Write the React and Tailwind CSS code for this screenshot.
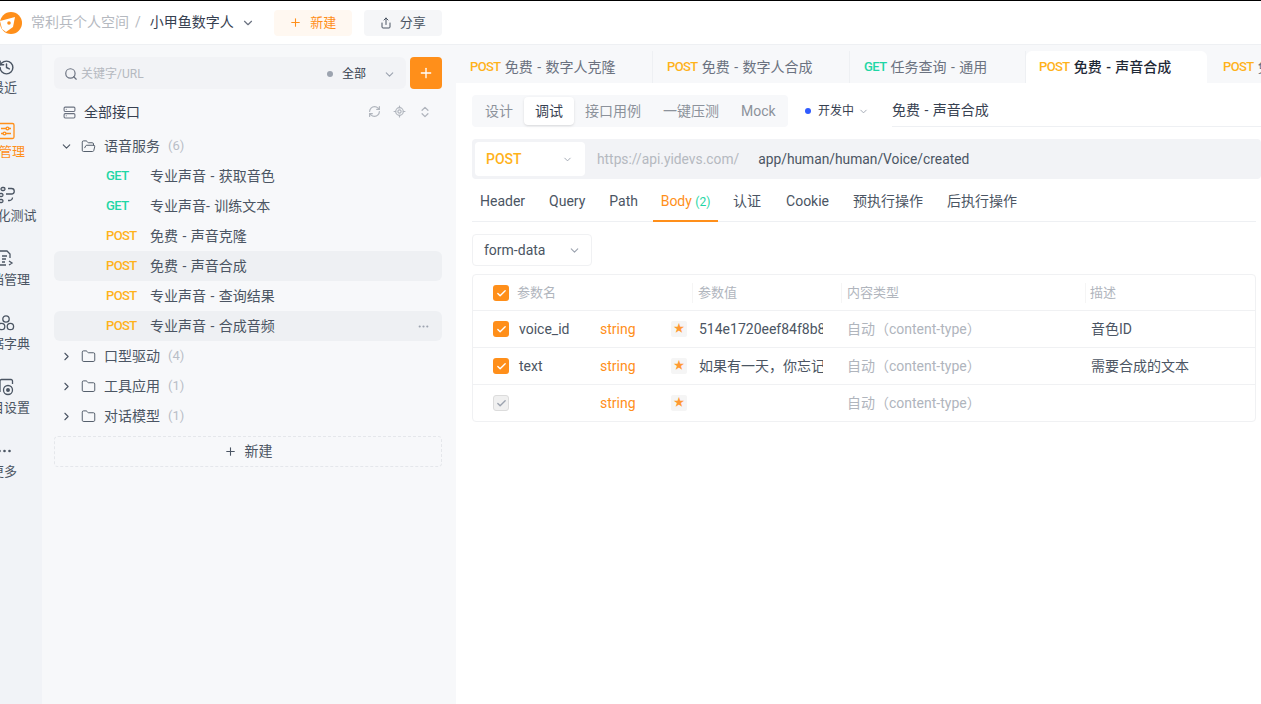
import {
  ChevronDown, ChevronRight, Plus, Search, RefreshCw, LocateFixed, ChevronsUpDown, Folder, FolderOpen,
  History, MoreHorizontal, Share, Check, Server,
} from "lucide-react";

const font = "font-['Roboto','Noto_Sans_CJK_SC',sans-serif]";

const Logo = () => (
  <svg width="22" height="22" viewBox="0 0 22 22" className="shrink-0">
    <circle cx="11" cy="11" r="11" fill="#ff8f1a" />
    <path d="M0 9 L15 5 L13 15 L6 20 L2 17 Z" fill="#fff" />
    <circle cx="9" cy="11" r="1.8" fill="#ff8f1a" />
  </svg>
);

// 左侧导航图标
const ApiIcon = () => (
  <svg width="18" height="18" viewBox="0 0 18 18" fill="none" stroke="currentColor" strokeWidth="1.3">
    <rect x="1" y="1.5" width="16" height="15" rx="1.5" />
    <path d="M4 6.5h5M12 6.5h2M4 11.5h2M9 11.5h5" />
    <circle cx="10.5" cy="6.5" r="1.4" />
    <circle cx="7.5" cy="11.5" r="1.4" />
  </svg>
);
const TestIcon = () => (
  <svg width="18" height="18" viewBox="0 0 18 18" fill="none" stroke="currentColor" strokeWidth="1.3">
    <rect x="4" y="1.5" width="4" height="3" rx="1.5" />
    <rect x="2" y="7.5" width="4" height="3" rx="1.5" />
    <rect x="2" y="13.5" width="4" height="3" rx="1.5" />
    <path d="M11 2.5h3.5a2 2 0 0 1 0 5.5H9M11 14.5h1.5a3 3 0 0 0 3-3" />
  </svg>
);
const DocIcon = () => (
  <svg width="18" height="18" viewBox="0 0 18 18" fill="none" stroke="currentColor" strokeWidth="1.3">
    <path d="M13 8V4l-3-3H2v14h7" />
    <path d="M5 6h5M5 9h4M5 12h3M12 11l3 2-3 2" />
  </svg>
);
const DictIcon = () => (
  <svg width="18" height="18" viewBox="0 0 18 18" fill="none" stroke="currentColor" strokeWidth="1.3">
    <circle cx="9" cy="5" r="3.2" />
    <circle cx="4.6" cy="12.5" r="3.2" />
    <circle cx="13.4" cy="12.5" r="3.2" />
  </svg>
);
const SettingIcon = () => (
  <svg width="18" height="18" viewBox="0 0 18 18" fill="none" stroke="currentColor" strokeWidth="1.3">
    <path d="M3 14V3a1.5 1.5 0 0 1 1.5-1.5H14A1.5 1.5 0 0 1 15.5 3v3" />
    <circle cx="11" cy="12" r="4.5" />
    <circle cx="11" cy="12" r="1.3" fill="currentColor" />
  </svg>
);
const MoreIcon = () => (
  <svg width="18" height="18" viewBox="0 0 18 18" fill="currentColor">
    <circle cx="2.5" cy="9" r="1.3" /><circle cx="7.5" cy="9" r="1.3" /><circle cx="12.5" cy="9" r="1.3" />
  </svg>
);

const NavItem = ({ icon, text, active }) => (
  <div className={`flex flex-col items-center h-[64px] ${active ? "text-[#ff8f1a] pr-[4px]" : "text-[#4b5563]"}`}>
    <div className={`h-[22px] flex items-center ${active ? "ml-[8px]" : "ml-[4px]"}`}>{icon}</div>
    <span className="text-[13px] leading-[20px] whitespace-nowrap">{text}</span>
  </div>
);

const Method = ({ m }) => (
  <span className={`w-[44px] shrink-0 text-[13px] font-medium tracking-[-0.6px] ${m === "GET" ? "text-[#1fd6a5]" : "text-[#ffb21a]"}`}>{m}</span>
);

const ApiRow = ({ m, text, hl, more }) => (
  <div className={`h-[30px] flex items-center pl-[52px] pr-3 rounded-md text-[14px] text-[#4b5563] [word-spacing:1px] ${hl ? "bg-[#eef0f3]" : ""}`}>
    <Method m={m} />
    <span className="flex-1 whitespace-nowrap">{text}</span>
    {more && <MoreHorizontal size={13} className="text-[#9ca3af]" />}
  </div>
);

const FolderRow = ({ text, n, open }) => (
  <div className="h-[30px] flex items-center pl-[6px] text-[14px] text-[#4b5563]">
    {open ? <ChevronDown size={13} /> : <ChevronRight size={13} />}
    {open
      ? <FolderOpen size={15} strokeWidth={1.5} className="ml-[8px]" />
      : <Folder size={15} strokeWidth={1.5} className="ml-[8px]" />}
    <span className="ml-[8px]">{text}</span>
    <span className="ml-[8px] text-[13px] text-[#b9bec7]">({n})</span>
  </div>
);

const Tab = ({ m, text, active, last, w }) => (
  <div className={`h-[32px] flex items-center shrink-0 text-[14px] whitespace-nowrap [word-spacing:1px] ${w} ${
    active ? "bg-white rounded-t-md pl-[13px] font-medium text-[#1f2937]" : last ? "pl-[16px] text-[#6b7280]" : "pl-[14px] text-[#6b7280] border-r border-[#eef0f3]"
  }`}>
    <span className={`mr-[4px] text-[13px] font-medium tracking-[-0.6px] ${m === "GET" ? "text-[#1fd6a5]" : "text-[#ffb21a]"}`}>{m}</span>
    {text}
  </div>
);

const Box = ({ on, off }) => (
  <span className={`w-[16px] h-[16px] rounded-[3px] flex items-center justify-center shrink-0 ${on ? "bg-[#ff8f1a]" : "bg-[#f0f0f0] border border-[#dcdcdc]"}`}>
    <Check size={11} strokeWidth={3} className={off ? "text-[#9ca3af]" : "text-white"} />
  </span>
);

const ParamRow = ({ name, value, desc, on }) => (
  <div className="h-[37px] grid grid-cols-[219px_149px_244px_1fr] items-center border-t border-[#f0f1f3] text-[14px]">
    <div className="flex items-center pl-[20px]">
      <Box on={on} off={!on} />
      <span className="ml-[10px] w-[81px] text-[#4b5563]">{name}</span>
      <span className="w-[71px] text-[#ff8f1a]">string</span>
      <span className="w-[16px] h-[16px] rounded-[2px] bg-[#f5f5f5] text-[#ff9a33] text-[11px] flex items-center justify-center">★</span>
    </div>
    <div className="pl-[7px]">
      <div className="w-[124px] overflow-hidden whitespace-nowrap text-[#4b5563]">{value}</div>
    </div>
    <div className="pl-[6px] text-[#b0b5bd]">自动（content-type）</div>
    <div className="pl-[6px] text-[#4b5563]">{desc}</div>
  </div>
);

export default function App() {
  return (
    <div className={`${font} w-[1261px] h-[704px] overflow-hidden bg-white flex flex-col text-[#374151]`}>
      <header className="h-[45px] shrink-0 border-t border-black border-b-[#eef0f3] border-b flex items-center">
        <Logo />
        <span className="ml-[9px] text-[14px] text-[#b5b9c0]">常利兵个人空间</span>
        <span className="ml-[6px] text-[14px] text-[#b5b9c0]">/</span>
        <span className="ml-[9px] text-[14px] text-[#374151]">小甲鱼数字人</span>
        <ChevronDown size={14} className="ml-[7px] text-[#6b7280]" />
        <button className="ml-[19px] w-[78px] h-[26px] rounded bg-[#fff8f1] text-[#ff8f1a] text-[13px] flex items-center justify-center gap-[8px]">
          <Plus size={13} />新建
        </button>
        <button className="ml-[12px] w-[78px] h-[26px] rounded bg-[#f5f6f8] text-[#4b5563] text-[13px] flex items-center justify-center gap-[8px]">
          <Share size={12} />分享
        </button>
      </header>

      <div className="flex-1 flex min-h-0">
        <aside className="w-[42px] shrink-0 bg-[#f1f3f7] overflow-hidden pt-[11px]">
          <div className="w-[70px] ml-[-31px] flex flex-col">
            <NavItem icon={<History size={17} />} text="最近" />
            <NavItem icon={<ApiIcon />} text="API管理" active />
            <NavItem icon={<TestIcon />} text="自动化测试" />
            <NavItem icon={<DocIcon />} text="文档管理" />
            <NavItem icon={<DictIcon />} text="数据字典" />
            <NavItem icon={<SettingIcon />} text="项目设置" />
            <NavItem icon={<MoreIcon />} text="更多" />
          </div>
        </aside>

        <section className="w-[414px] shrink-0 bg-[#f7f8fa] px-[12px] pt-[12px] pr-[14px]">
          <div className="flex gap-[4px]">
            <div className="flex-1 h-[32px] bg-[#f2f3f6] rounded-md flex items-center pl-[10px] pr-[10px] pt-[2px]">
              <Search size={14} className="text-[#6b7280]" />
              <span className="ml-[3px] flex-1 text-[12px] text-[#b5b9c0]">关键字/URL</span>
              <span className="w-[6px] h-[6px] rounded-full bg-[#9ca3af]" />
              <span className="ml-[9px] text-[12px] text-[#374151]">全部</span>
              <ChevronDown size={13} className="ml-[17px] text-[#9ca3af]" />
            </div>
            <button className="w-[32px] h-[32px] rounded bg-[#ff8f1a] text-white flex items-center justify-center"><Plus size={16} /></button>
          </div>
          <div className="h-[30px] mt-[8px] flex items-center pl-[9px] pr-[10px] text-[14px] text-[#374151]">
            <Server size={13} className="text-[#6b7280]" />
            <span className="ml-[8px] flex-1">全部接口</span>
            <div className="flex gap-[12px] text-[#b0b5bd]">
              <RefreshCw size={13} strokeWidth={2.2} /><LocateFixed size={13} strokeWidth={2.2} /><ChevronsUpDown size={14} strokeWidth={2.2} />
            </div>
          </div>
          <div className="mt-[4px]">
            <FolderRow text="语音服务" n={6} open />
            <ApiRow m="GET" text="专业声音 - 获取音色" />
            <ApiRow m="GET" text="专业声音- 训练文本" />
            <ApiRow m="POST" text="免费 - 声音克隆" />
            <ApiRow m="POST" text="免费 - 声音合成" hl />
            <ApiRow m="POST" text="专业声音 - 查询结果" />
            <ApiRow m="POST" text="专业声音 - 合成音频" hl more />
            <FolderRow text="口型驱动" n={4} />
            <FolderRow text="工具应用" n={1} />
            <FolderRow text="对话模型" n={1} />
          </div>
          <div className="mt-[5px] h-[31px] rounded border border-dashed border-[#e5e7eb] flex items-center justify-center gap-[8px] text-[14px] text-[#4b5563]">
            <Plus size={13} />新建
          </div>
        </section>

        <main className="flex-1 min-w-0 overflow-hidden">
          <div className="h-[38px] bg-[#f7f8fa] flex items-end">
            <Tab m="POST" text="免费 - 数字人克隆" w="w-[197px]" />
            <Tab m="POST" text="免费 - 数字人合成" w="w-[197px]" />
            <Tab m="GET" text="任务查询 - 通用" w="w-[176px]" />
            <Tab m="POST" text="免费 - 声音合成" active w="w-[181px]" />
            <Tab m="POST" text="免费 - 声音克隆" last />
          </div>

          <div className="pl-[16px]">
            <div className="mt-[12px] flex items-center">
              <div className="w-[316px] h-[32px] bg-[#f7f8fa] rounded flex items-center pl-[2px] text-[14px] text-[#8c929b]">
                <span className="w-[50px] text-center">设计</span>
                <span className="w-[50px] h-[28px] bg-white rounded shadow-sm flex items-center justify-center text-[#374151]">调试</span>
                <span className="ml-[11px]">接口用例</span>
                <span className="ml-[22px]">一键压测</span>
                <span className="ml-[22px]">Mock</span>
              </div>
              <span className="ml-[17px] w-[6px] h-[6px] rounded-full bg-[#2f5bff]" />
              <span className="ml-[7px] text-[12px] text-[#374151]">开发中</span>
              <ChevronDown size={11} className="ml-[4px] text-[#9ca3af]" />
              <div className="ml-[23px] flex-1 h-[32px] flex items-center border-b border-[#eef0f3] text-[14px] text-[#374151] [word-spacing:1px]">免费 - 声音合成</div>
            </div>

            <div className="mt-[12px] h-[40px] bg-[#f2f3f6] rounded flex items-center pl-[3px]">
              <div className="w-[110px] h-[34px] bg-white rounded flex items-center pl-[11px] pr-[12px] justify-between">
                <span className="text-[14px] font-medium text-[#ffb21a]">POST</span>
                <ChevronDown size={11} className="text-[#9ca3af]" />
              </div>
              <span className="ml-[12px] text-[13.8px] text-[#b5b9c0]">https://api.yidevs.com/</span>
              <span className="ml-[19px] text-[13.8px] text-[#4b5563]">app/human/human/Voice/created</span>
            </div>

            <div className="mt-[11px] mr-[5px] h-[32px] flex items-start pt-[1px] border-b border-[#eef0f3] text-[14px] text-[#4b5563] whitespace-nowrap">
              <span className="ml-[8px]">Header</span>
              <span className="ml-[24px]">Query</span>
              <span className="ml-[24px]">Path</span>
              <span className="ml-[15px] w-[65px] h-[31px] border-b-2 border-[#ff8f1a] text-center text-[#ff8f1a]">Body <span className="text-[12px] text-[#1fd6a5]">(2)</span></span>
              <span className="ml-[15px]">认证</span>
              <span className="ml-[25px]">Cookie</span>
              <span className="ml-[24px]">预执行操作</span>
              <span className="ml-[24px]">后执行操作</span>
            </div>

            <div className="mt-[12px] w-[120px] h-[32px] rounded border border-[#f0f1f3] flex items-center justify-between pl-[11px] pr-[10px] text-[14px] text-[#4b5563]">
              form-data<ChevronDown size={13} className="text-[#9ca3af]" />
            </div>

            <div className="mt-[8px] mr-[5px] rounded border border-[#f0f1f3]">
              <div className="h-[35px] pt-[1px] grid grid-cols-[219px_149px_244px_1fr] items-center text-[13px] text-[#b0b5bd]">
                <div className="flex items-center pl-[20px]"><Box on /><span className="ml-[8px]">参数名</span></div>
                <div className="pl-[5px] border-l border-[#f5f5f5]">参数值</div>
                <div className="pl-[5px] border-l border-[#f5f5f5]">内容类型</div>
                <div className="pl-[4px] border-l border-[#f5f5f5]">描述</div>
              </div>
              <ParamRow name="voice_id" value="514e1720eef84f8b82" desc="音色ID" on />
              <ParamRow name="text" value="如果有一天，你忘记了我" desc="需要合成的文本" on />
              <ParamRow name="" value="" desc="" />
            </div>
          </div>
        </main>
      </div>
    </div>
  );
}
